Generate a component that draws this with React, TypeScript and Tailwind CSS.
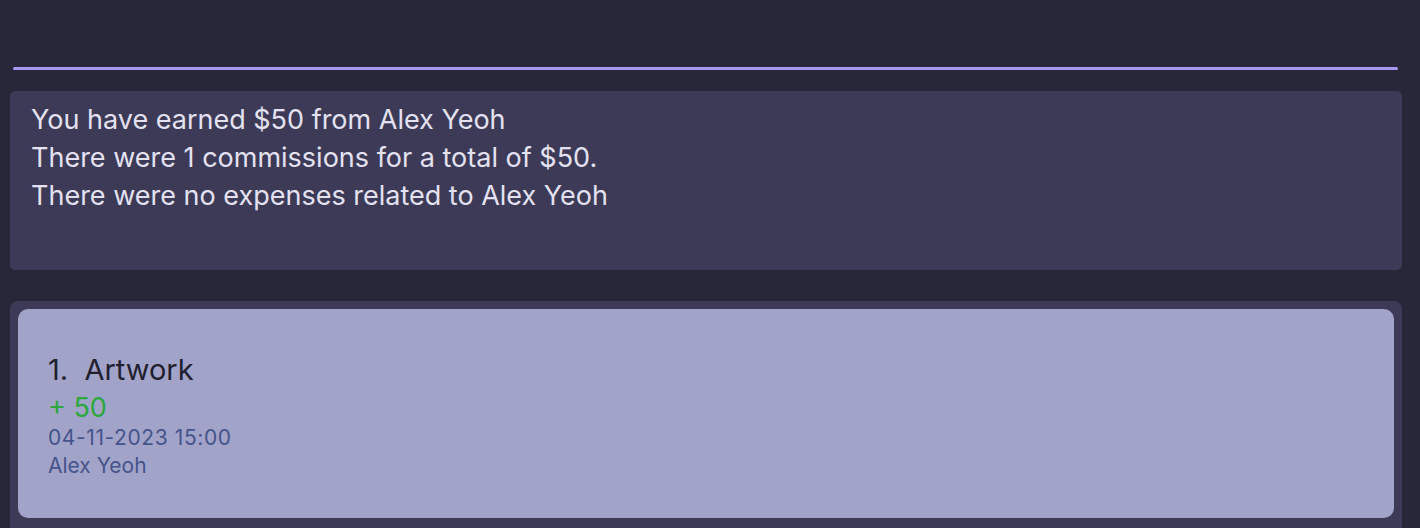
import React from 'react';

const font = { fontFamily: 'Inter, "Noto Sans", sans-serif' };

const App = () => {
  return (
    <div className="w-[1420px] h-[528px] overflow-hidden bg-[#282639] flex flex-col" style={font}>
      {/* command box */}
      <div className="h-[67px] mx-[13px] mr-[22px] relative">
        <div className="absolute left-0 right-0 bottom-[-3px] h-[3px] bg-[#a898f4] rounded-full" />
      </div>

      {/* result display */}
      <div className="mt-[24px] mx-[10px] mr-[18px] h-[179px] bg-[#3c3a56] rounded-[5px] px-[21px] pt-[10px]">
        <div className="text-[27px] leading-[38px] text-[#e4e2f2]">
          <p>You have earned $50 from Alex Yeoh</p>
          <p>There were 1 commissions for a total of $50.</p>
          <p>There were no expenses related to Alex Yeoh</p>
        </div>
      </div>

      {/* list */}
      <div className="mt-[31px] mx-[10px] mr-[18px] flex-1 bg-[#3c3a56] rounded-t-[8px] p-[8px]">
        <div className="h-[209px] bg-[#a2a3c9] rounded-[10px] px-[30px] pt-[36px]">
          <div className="text-[29px] leading-[50px] text-[#20202e]">1.&nbsp;&nbsp;Artwork</div>
          <div className="text-[27px] leading-[24px] text-[#2aa83c] mt-[1px]">+ 50</div>
          <div className="text-[21px] leading-[30px] text-[#45548a] mt-[3px] tracking-[0.6px]">04-11-2023 15:00</div>
          <div className="text-[21px] leading-[26px] text-[#45548a]">Alex Yeoh</div>
        </div>
      </div>
    </div>
  );
};

export default App;
